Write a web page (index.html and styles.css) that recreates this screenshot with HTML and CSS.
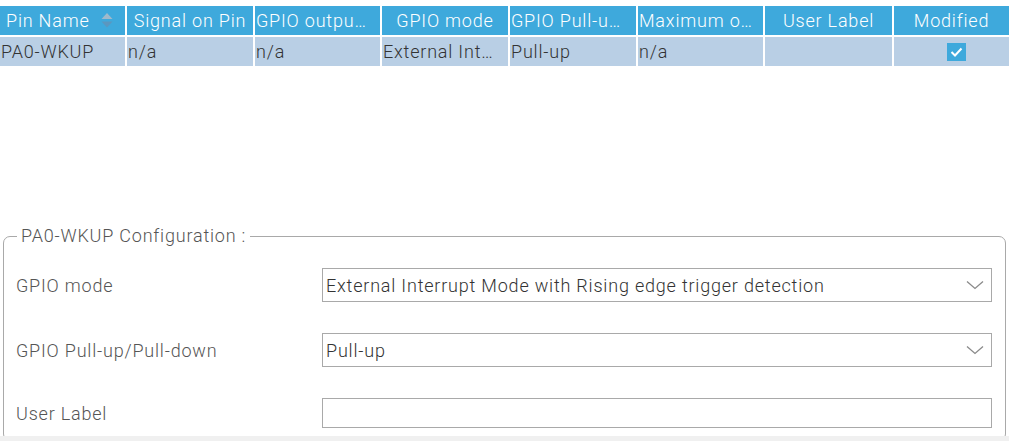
FILE: index.html
```html
<!DOCTYPE html>
<html>
<head>
<meta charset="utf-8">
<link rel="stylesheet" href="styles.css">
</head>
<body>
<div class="page">
  <div class="grid">
    <div class="hcell hleft"><span class="htext">Pin Name</span><svg class="sort" width="12" height="17" viewBox="0 0 12 17"><path d="M6 1 L11.5 7 L0.5 7 Z" fill="#9fb9cb"/><path d="M0.5 9.5 L11.5 9.5 L6 15.5 Z" fill="#5b97bf"/></svg></div>
    <div class="hcell">Signal on Pin</div>
    <div class="hcell htrunc">GPIO outpu…</div>
    <div class="hcell">GPIO mode</div>
    <div class="hcell htrunc">GPIO Pull-u…</div>
    <div class="hcell htrunc">Maximum o…</div>
    <div class="hcell">User Label</div>
    <div class="hcell">Modified</div>

    <div class="cell">PA0-WKUP</div>
    <div class="cell">n/a</div>
    <div class="cell">n/a</div>
    <div class="cell">External Int…</div>
    <div class="cell">Pull-up</div>
    <div class="cell">n/a</div>
    <div class="cell"></div>
    <div class="cell ccenter"><span class="check"><svg width="19" height="18" viewBox="0 0 19 18"><path d="M4.5 9 L8 12.5 L14.5 5.5" fill="none" stroke="#fff" stroke-width="2"/></svg></span></div>
  </div>

  <fieldset class="config">
    <legend>PA0-WKUP Configuration :</legend>
    <div class="form">
      <div class="label">GPIO mode</div>
      <div class="select">External Interrupt Mode with Rising edge trigger detection<svg class="chev" width="18" height="10" viewBox="0 0 18 10"><path d="M1 1.5 L9 8.5 L17 1.5" fill="none" stroke="#8a8a8a" stroke-width="1.3"/></svg></div>
      <div class="label">GPIO Pull-up/Pull-down</div>
      <div class="select">Pull-up<svg class="chev" width="18" height="10" viewBox="0 0 18 10"><path d="M1 1.5 L9 8.5 L17 1.5" fill="none" stroke="#8a8a8a" stroke-width="1.3"/></svg></div>
      <div class="label">User Label</div>
      <div class="input"></div>
    </div>
  </fieldset>
  <div class="footer"></div>
</div>
</body>
</html>
```

FILE: styles.css
```css
html, body {
  margin: 0;
  padding: 0;
  background: #ffffff;
}
body {
  font-family: Roboto, "Liberation Sans", sans-serif;
  font-weight: 300;
  font-size: 18px;
  letter-spacing: 0.8px;
  color: #333333;
  width: 1009px;
  height: 441px;
  overflow: hidden;
}
.page {
  position: relative;
  height: 441px;
  display: flex;
  flex-direction: column;
}
.grid {
  margin-top: 6px;
  display: grid;
  grid-template-columns: 125px 126px 125px 126px 126px 125px 127px 1fr;
  grid-auto-rows: 29px;
  column-gap: 2px;
  row-gap: 2px;
}
.hcell {
  background: #3ea9dc;
  color: #ffffff;
  line-height: 29px;
  text-align: center;
  white-space: nowrap;
  overflow: hidden;
  padding: 0 1px;
}
.htrunc {
  text-align: left;
}
.hleft {
  text-align: left;
  padding-left: 6px;
  display: flex;
  align-items: center;
  justify-content: space-between;
  padding-right: 12px;
}
.sort {
  display: block;
}
.cell {
  background: #b9cfe5;
  color: #333333;
  line-height: 29px;
  white-space: nowrap;
  overflow: hidden;
  padding: 0 1px;
}
.ccenter {
  display: flex;
  align-items: center;
  justify-content: center;
  padding-left: 10px;
}
.check {
  display: block;
  width: 19px;
  height: 18px;
  background: #3ea9dc;
}
.check svg {
  display: block;
}
.config {
  margin: 160px 3px 0 3px;
  padding: 22px 12px 0 12px;
  border: 1px solid #a9a9a9;
  border-radius: 7px;
  flex: 1;
  min-height: 0;
}
.config legend {
  padding: 0 4px 0 4px;
  margin-left: 1px;
  color: #555555;
  font-size: 18px;
  line-height: 20px;
}
.form {
  display: grid;
  grid-template-columns: 306px 670px;
  grid-template-rows: 34px 34px 30px;
  row-gap: 31px;
  align-items: center;
}
.label {
  color: #555555;
}
.select {
  height: 34px;
  box-sizing: border-box;
  border: 1px solid #a9a9a9;
  background: #ffffff;
  display: flex;
  align-items: center;
  justify-content: space-between;
  padding: 0 7px 0 3px;
  color: #333333;
  white-space: nowrap;
}
.chev {
  display: block;
}
.input {
  height: 30px;
  box-sizing: border-box;
  border: 1px solid #a9a9a9;
  background: #ffffff;
}
.footer {
  position: absolute;
  left: 0;
  right: 0;
  bottom: 0;
  height: 5px;
  background: #f0f0f0;
}
```
